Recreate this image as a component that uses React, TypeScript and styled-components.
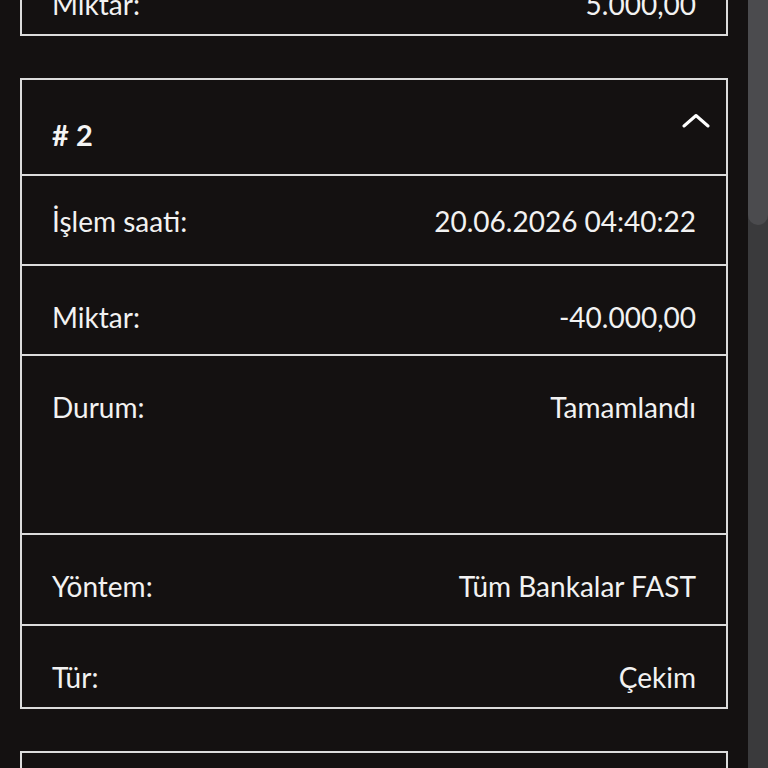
import React, { useLayoutEffect, useRef } from 'react';
import styled, { createGlobalStyle } from 'styled-components';

const GlobalStyle = createGlobalStyle`
  html, body {
    margin: 0;
    padding: 0;
    background: #141111;
    font-family: Lato, "Noto Sans", sans-serif;
    color: #f4f4f4;
  }
`;

const Screen = styled.div`
  display: flex;
  height: 768px;
  overflow: hidden;
  background: #141111;
`;

const List = styled.div`
  position: relative;
  flex: 1;
  height: 768px;
  overflow-y: auto;
  scrollbar-width: none;
  padding: 20px 20px 40px;
  box-sizing: border-box;
  display: flex;
  flex-direction: column;
  gap: 42px;

  &::-webkit-scrollbar {
    display: none;
  }
`;

const ScrollTrack = styled.div`
  width: 20px;
  height: 768px;
  background: #3a3a3c;
  flex-shrink: 0;
`;

const ScrollThumb = styled.div`
  height: 225px;
  background: #4b4b4e;
  border-radius: 0 0 10px 10px;
`;

const Card = styled.div`
  border: 2px solid #dcdcdc;
  display: flex;
  flex-direction: column;
  flex-shrink: 0;
`;

const Header = styled.div`
  height: 96px;
  box-sizing: border-box;
  border-bottom: 2px solid #dcdcdc;
  display: flex;
  justify-content: space-between;
  align-items: flex-start;
  padding: 33px 16px 0 30px;
`;

const Title = styled.div`
  font-size: 29px;
  line-height: 35px;
  font-weight: 700;
  margin-top: 4px;
`;

const Toggle = styled.button`
  background: none;
  border: none;
  padding: 0;
  width: 28px;
  height: 15px;
  color: #ffffff;
  cursor: pointer;
  display: flex;
`;

const Row = styled.div<{ $height: number; $top: number; $last?: boolean }>`
  height: ${(p) => p.$height}px;
  box-sizing: border-box;
  border-bottom: ${(p) => (p.$last ? 'none' : '2px solid #dcdcdc')};
  display: flex;
  justify-content: space-between;
  align-items: flex-start;
  padding: ${(p) => p.$top}px 30px 0 30px;
  font-size: 28px;
  line-height: 34px;
`;

const Label = styled.span`
  color: #f2f2f2;
`;

const Value = styled.span`
  color: #f2f2f2;
  text-align: right;
`;

type Field = { label: string; value: string; height?: number };

type Transaction = { id: number; fields: Field[] };

const transactions: Transaction[] = [
  {
    id: 1,
    fields: [
      { label: 'İşlem saati:', value: '20.06.2026 05:12:08' },
      { label: 'Durum:', value: 'Tamamlandı', height: 180 },
      { label: 'Yöntem:', value: 'Tüm Bankalar FAST' },
      { label: 'Tür:', value: 'Yatırım' },
      { label: 'Miktar:', value: '5.000,00' },
    ],
  },
  {
    id: 2,
    fields: [
      { label: 'İşlem saati:', value: '20.06.2026 04:40:22' },
      { label: 'Miktar:', value: '-40.000,00' },
      { label: 'Durum:', value: 'Tamamlandı', height: 179 },
      { label: 'Yöntem:', value: 'Tüm Bankalar FAST', height: 91 },
      { label: 'Tür:', value: 'Çekim' },
    ],
  },
  {
    id: 3,
    fields: [
      { label: 'İşlem saati:', value: '19.06.2026 22:15:47' },
      { label: 'Miktar:', value: '10.000,00' },
      { label: 'Durum:', value: 'Tamamlandı', height: 179 },
      { label: 'Yöntem:', value: 'Tüm Bankalar FAST', height: 91 },
      { label: 'Tür:', value: 'Yatırım' },
    ],
  },
];

const ChevronUp = () => (
  <svg width="28" height="15" viewBox="0 0 28 15" fill="none">
    <polyline
      points="2,13 14,2.5 26,13"
      stroke="currentColor"
      strokeWidth="3"
      strokeLinecap="round"
      strokeLinejoin="round"
    />
  </svg>
);

const TransactionCard = ({ tx, cardRef }: { tx: Transaction; cardRef?: React.Ref<HTMLDivElement> }) => (
  <Card ref={cardRef}>
    <Header>
      <Title># {tx.id}</Title>
      <Toggle aria-label="Kapat">
        <ChevronUp />
      </Toggle>
    </Header>
    {tx.fields.map((f, i) => {
      const last = i === tx.fields.length - 1;
      return (
        <Row
          key={f.label}
          $height={f.height ?? (last ? 81 : 90)}
          $top={i === 0 ? 28 : 34}
          $last={last}
        >
          <Label>{f.label}</Label>
          <Value>{f.value}</Value>
        </Row>
      );
    })}
  </Card>
);

const App: React.FC = () => {
  const listRef = useRef<HTMLDivElement | null>(null);
  const firstRef = useRef<HTMLDivElement | null>(null);

  // keep the view where the first card just ends at the top
  useLayoutEffect(() => {
    const list = listRef.current;
    const first = firstRef.current;
    if (!list || !first) return;
    list.scrollTop = first.offsetTop + first.offsetHeight - 36;
  }, []);

  return (
    <>
      <GlobalStyle />
      <Screen>
        <List ref={listRef}>
          {transactions.map((tx, i) => (
            <TransactionCard key={tx.id} tx={tx} cardRef={i === 0 ? firstRef : undefined} />
          ))}
        </List>
        <ScrollTrack>
          <ScrollThumb />
        </ScrollTrack>
      </Screen>
    </>
  );
};

export default App;
